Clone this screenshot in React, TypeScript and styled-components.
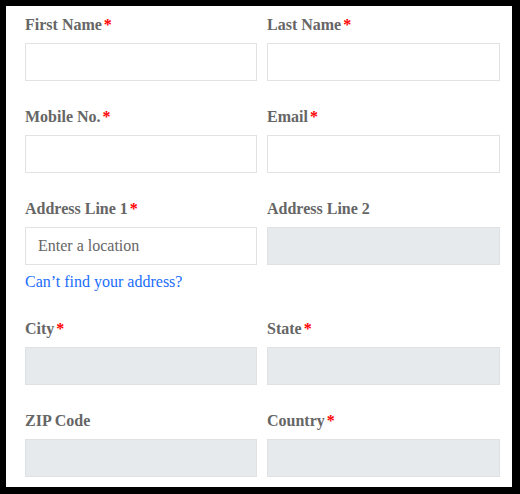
import React from "react";
import styled, { createGlobalStyle } from "styled-components";

const GlobalStyle = createGlobalStyle`
  html, body {
    margin: 0;
    padding: 0;
    background: #000;
  }
`;

const serif = `"Liberation Serif", Tinos, "Nimbus Roman", "Nimbus Roman No9 L", FreeSerif, "Noto Serif", "DejaVu Serif", "Times New Roman", Times, serif`;

const Frame = styled.div`
  box-sizing: border-box;
  width: 520px;
  height: 494px;
  padding: 6px 8px 7px 6px;
  background: #000;
`;

const Panel = styled.form`
  box-sizing: border-box;
  height: 100%;
  background: #fff;
  padding: 10px 11px 0 19px;
  display: grid;
  grid-template-columns: 232px 233px;
  column-gap: 10px;
  row-gap: 27px;
  align-content: start;
  font-family: ${serif};
`;

const Field = styled.div`
  display: flex;
  flex-direction: column;
`;

const Label = styled.label`
  font-family: ${serif};
  font-size: 16px;
  line-height: 18px;
  font-weight: bold;
  color: #666;
  margin-bottom: 9px;
`;

const Star = styled.span`
  color: #f00;
  margin-left: 2px;
`;

const Input = styled.input<{ $disabled?: boolean }>`
  box-sizing: border-box;
  height: 38px;
  width: 100%;
  margin: 0;
  padding: 0 12px;
  border: 1px solid ${(p) => (p.$disabled ? "#dfe2e5" : "#e2e2e2")};
  background: ${(p) => (p.$disabled ? "#e7eaed" : "#fff")};
  font-family: ${serif};
  font-size: 16px;
  color: #444;
  outline: none;

  &::placeholder {
    color: #666;
    opacity: 1;
  }
`;

const HelpLink = styled.a`
  font-family: ${serif};
  margin-top: 8px;
  margin-bottom: 2px;
  font-size: 16px;
  line-height: 18px;
  color: #1a6dfb;
  text-decoration: none;
  cursor: pointer;
`;

type FieldDef = {
  label: string;
  required?: boolean;
  disabled?: boolean;
  placeholder?: string;
  link?: string;
};

const fields: FieldDef[] = [
  { label: "First Name", required: true },
  { label: "Last Name", required: true },
  { label: "Mobile No.", required: true },
  { label: "Email", required: true },
  {
    label: "Address Line 1",
    required: true,
    placeholder: "Enter a location",
    link: "Can\u2019t find your address?",
  },
  { label: "Address Line 2", disabled: true },
  { label: "City", required: true, disabled: true },
  { label: "State", required: true, disabled: true },
  { label: "ZIP Code", disabled: true },
  { label: "Country", required: true, disabled: true },
];

export default function App() {
  return (
    <Frame>
      <GlobalStyle />
      <Panel onSubmit={(e) => e.preventDefault()}>
        {fields.map((f) => (
          <Field key={f.label}>
            <Label>
              {f.label}
              {f.required && <Star>*</Star>}
            </Label>
            <Input
              $disabled={f.disabled}
              disabled={f.disabled}
              placeholder={f.placeholder}
            />
            {f.link && <HelpLink>{f.link}</HelpLink>}
          </Field>
        ))}
      </Panel>
    </Frame>
  );
}
